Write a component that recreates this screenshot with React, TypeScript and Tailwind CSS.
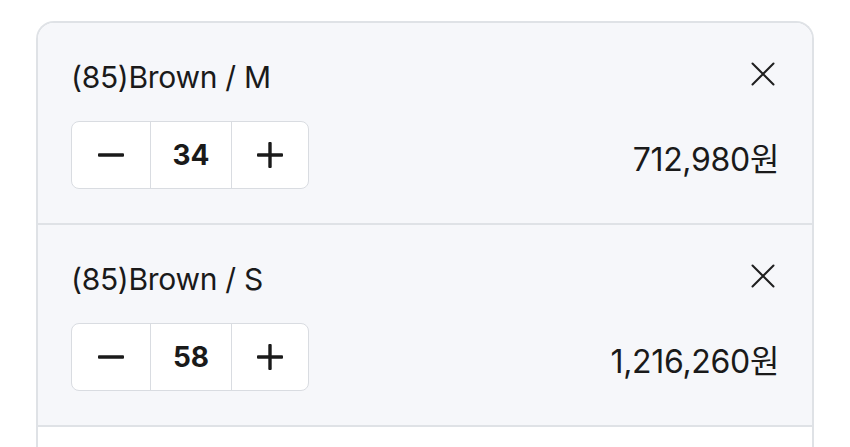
import { Fragment } from 'react';

interface OptionItem {
  id: string;
  label: string;
  qty: number;
  unitPrice: number;
}

const items: OptionItem[] = [
  { id: 'brown-m', label: '(85)Brown / M', qty: 34, unitPrice: 20970 },
  { id: 'brown-s', label: '(85)Brown / S', qty: 58, unitPrice: 20970 },
];

const font = { fontFamily: 'Inter, "Noto Sans CJK KR", sans-serif' };

function CloseIcon() {
  return (
    <svg width="24" height="24" viewBox="0 0 24 24" fill="none" stroke="#1f1f1f" strokeWidth="2" strokeLinecap="round">
      <path d="M1.5 1.5L22.5 22.5M22.5 1.5L1.5 22.5" />
    </svg>
  );
}

function Stepper({ qty }: { qty: number }) {
  return (
    <div className="flex h-[68px] w-[238px] overflow-hidden rounded-[8px] border border-[#d9dce1] bg-white">
      <button className="flex w-[79px] items-center justify-center border-r border-[#d9dce1]">
        <svg width="26" height="4" viewBox="0 0 26 4">
          <rect width="26" height="3.4" y="0.3" rx="1" fill="#1a1a1a" />
        </svg>
      </button>
      <div className="flex w-[81px] items-center justify-center border-r border-[#d9dce1] text-[28px] font-bold text-[#1a1a1a]">
        {qty}
      </div>
      <button className="flex flex-1 items-center justify-center">
        <svg width="26" height="26" viewBox="0 0 26 26">
          <rect x="0" y="11.3" width="26" height="3.4" rx="1" fill="#1a1a1a" />
          <rect x="11.3" y="0" width="3.4" height="26" rx="1" fill="#1a1a1a" />
        </svg>
      </button>
    </div>
  );
}

export default function App() {
  return (
    <div className="min-h-screen bg-white pl-[36px] pt-[21px]" style={font}>
      <div className="w-[778px] overflow-hidden rounded-t-[18px] border-x-2 border-t-2 border-[#dfe2e6]">
        {items.map((item) => (
          <Fragment key={item.id}>
            <div className="border-b-2 border-[#dfe2e6] bg-[#f6f7fa] pb-[34px] pl-[33px] pr-[33px] pt-[37px]">
              <div className="flex h-[34px] items-center justify-between">
                <span className="text-[30px] leading-[34px] tracking-[-0.01em] text-[#1a1a1a]">{item.label}</span>
                <span className="mb-[6px] mr-[4px]">
                  <CloseIcon />
                </span>
              </div>
              <div className="mt-[27px] flex items-center justify-between">
                <Stepper qty={item.qty} />
                <span className="mt-[10px] text-[32px] tracking-[-0.01em] text-[#1a1a1a]">
                  {(item.qty * item.unitPrice).toLocaleString('ko-KR')}원
                </span>
              </div>
            </div>
          </Fragment>
        ))}
        <div className="h-[40px] bg-white" />
      </div>
    </div>
  );
}
